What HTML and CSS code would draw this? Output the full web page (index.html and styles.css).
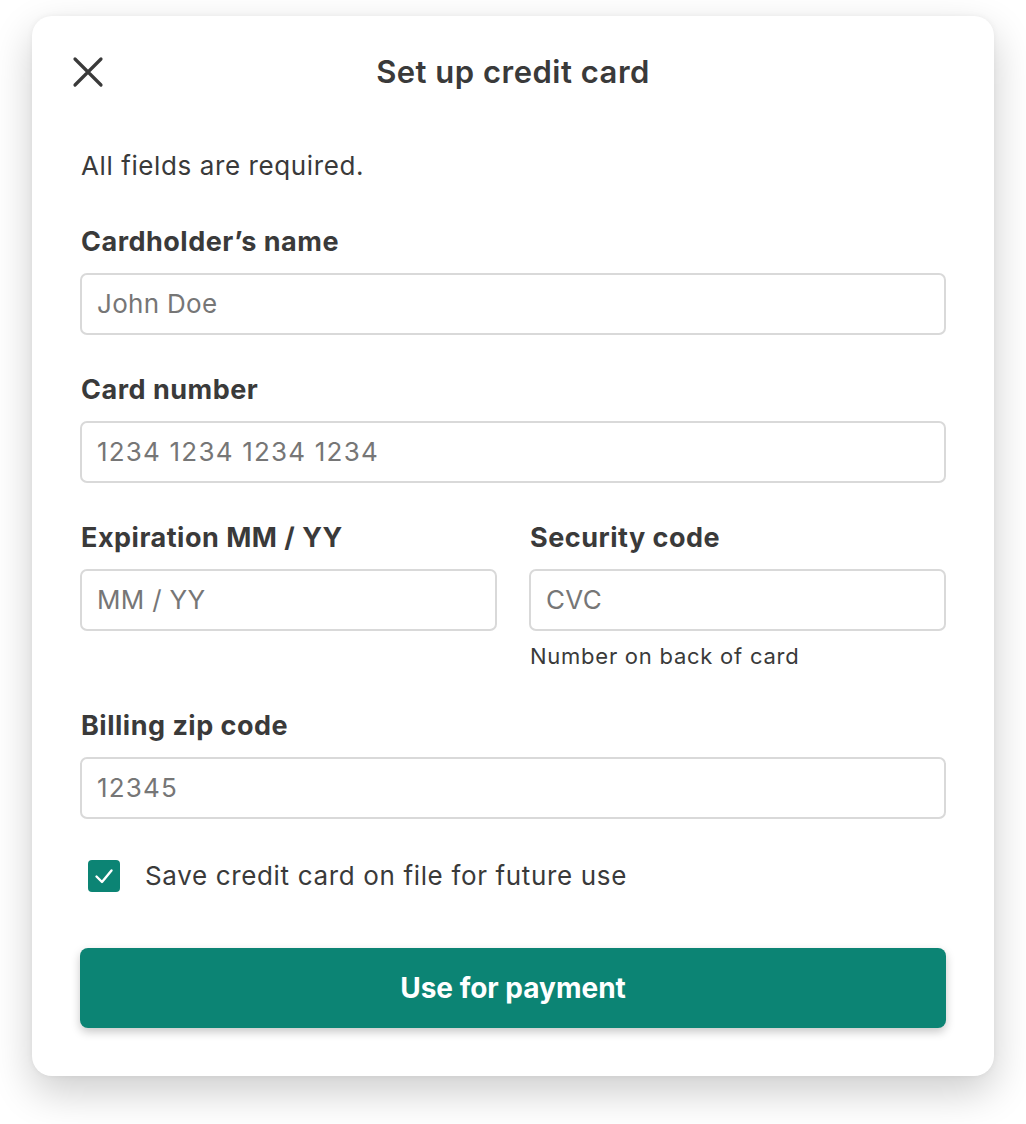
FILE: index.html
```html
<!DOCTYPE html>
<html lang="en">
<head>
<meta charset="utf-8">
<title>Set up credit card</title>
<link rel="stylesheet" href="styles.css">
</head>
<body>
<div class="card">
  <div class="header">
    <button class="close" aria-label="Close">
      <svg width="32" height="32" viewBox="0 0 32 32"><path d="M3 3 L29 29 M29 3 L3 29" stroke="#3a3a3a" stroke-width="3.2" stroke-linecap="round" fill="none"/></svg>
    </button>
    <h1 class="title">Set up credit card</h1>
  </div>
  <p class="intro">All fields are required.</p>

  <div class="field first">
    <label class="label">Cardholder’s name</label>
    <div class="input">John Doe</div>
  </div>
  <div class="field">
    <label class="label">Card number</label>
    <div class="input num">1234 1234 1234 1234</div>
  </div>
  <div class="row">
    <div class="col">
      <label class="label">Expiration MM / YY</label>
      <div class="input">MM / YY</div>
    </div>
    <div class="col">
      <label class="label">Security code</label>
      <div class="input">CVC</div>
      <div class="help">Number on back of card</div>
    </div>
  </div>
  <div class="field zip">
    <label class="label">Billing zip code</label>
    <div class="input num">12345</div>
  </div>
  <div class="check-row">
    <span class="checkbox">
      <svg width="32" height="32" viewBox="0 0 32 32"><path d="M8.5 16.5 L14 22 L23.5 10.5" stroke="#fff" stroke-width="2.4" stroke-linecap="round" stroke-linejoin="round" fill="none"/></svg>
    </span>
    <span class="check-text">Save credit card on file for future use</span>
  </div>
  <button class="pay">Use for payment</button>
</div>
</body>
</html>
```
FILE: styles.css
```css
* { box-sizing: border-box; }
body {
  margin: 0;
  padding: 16px 32px 48px 32px;
  background: #ffffff;
  font-family: Inter, "Noto Sans", sans-serif;
  color: #3a3a3a;
}
.card {
  width: 962px;
  background: #fff;
  border-radius: 20px;
  box-shadow: 0 16px 40px rgba(0,0,0,0.2), 0 0 6px rgba(0,0,0,0.05);
  padding: 24px 48px 48px 48px;
}
.header {
  position: relative;
  height: 64px;
  display: flex;
  align-items: center;
  justify-content: center;
}
.close {
  position: absolute;
  left: -8px;
  top: 16px;
  width: 32px;
  height: 32px;
  padding: 0;
  border: 0;
  background: none;
  display: flex;
}
.title {
  margin: 0;
  font-size: 31px;
  font-weight: 600;
  letter-spacing: 0.5px;
  line-height: 64px;
  color: #3a3a3a;
}
.intro {
  margin: 46px 0 0 1px;
  font-size: 26px;
  letter-spacing: 0.6px;
  line-height: 32px;
}
.field { margin-top: 39px; }
.field.first { margin-top: 44px; }
.label {
  display: block;
  font-size: 27px;
  font-weight: 700;
  letter-spacing: 0.5px;
  line-height: 32px;
  margin-bottom: 15px;
  margin-left: 1px;
}
.input {
  height: 62px;
  border: 2px solid #d9d9d9;
  border-radius: 7px;
  padding: 0 15px;
  font-size: 26px;
  letter-spacing: 0.3px;
  line-height: 58px;
  color: #767676;
}
.input.num { letter-spacing: 1.2px; }
.row {
  margin-top: 39px;
  display: grid;
  grid-template-columns: 1fr 1fr;
  column-gap: 32px;
  align-items: start;
}
.help {
  margin-top: 11px;
  font-size: 22px;
  letter-spacing: 0.75px;
  line-height: 28px;
  margin-left: 1px;
}
.field.zip { margin-top: 40px; }
.check-row {
  margin-top: 41px;
  display: flex;
  align-items: center;
  height: 32px;
  padding-left: 8px;
}
.checkbox {
  width: 32px;
  height: 32px;
  border-radius: 4px;
  background: #0c8474;
  display: flex;
}
.check-text {
  margin-left: 25px;
  font-size: 26px;
  letter-spacing: 0.65px;
  line-height: 32px;
}
.pay {
  display: block;
  margin-top: 56px;
  width: 100%;
  height: 80px;
  border: 0;
  border-radius: 8px;
  background: #0c8474;
  color: #fff;
  font-family: Inter, "Noto Sans", sans-serif;
  font-size: 28px;
  font-weight: 700;
  box-shadow: 0 4px 10px rgba(0,0,0,0.22);
}
```
